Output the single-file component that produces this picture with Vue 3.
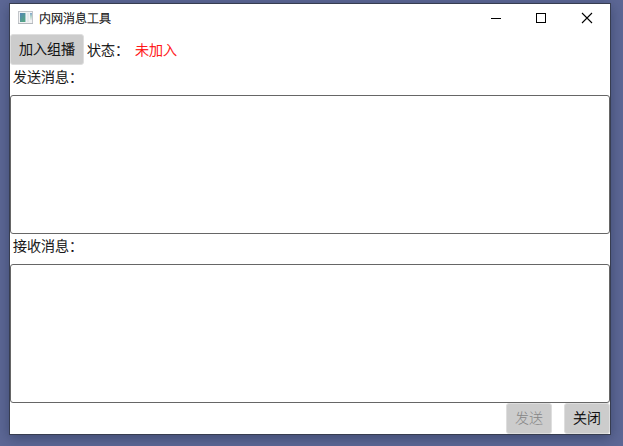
<script setup>
import { ref } from 'vue'

const joined = ref(false)
const outgoing = ref('')
const incoming = ref('')
</script>

<template>
  <div class="desktop">
    <main class="window">
      <header class="titlebar">
        <svg class="app-icon" width="16" height="14" viewBox="0 0 16 14">
          <defs>
            <linearGradient id="pane" x1="0" y1="0" x2="0.7" y2="1">
              <stop offset="0" stop-color="#5585b8" />
              <stop offset="1" stop-color="#54a582" />
            </linearGradient>
            <linearGradient id="side" x1="0" y1="0" x2="0" y2="1">
              <stop offset="0" stop-color="#7fa5cc" />
              <stop offset="0.5" stop-color="#b5d6ca" />
              <stop offset="1" stop-color="#e6eaec" />
            </linearGradient>
          </defs>
          <rect x="0.5" y="0.5" width="14" height="12" fill="#f2f3f4" stroke="#c3c6ca" />
          <rect x="2" y="2" width="5" height="9" fill="url(#pane)" />
          <rect x="7" y="2" width="1" height="9" fill="#aacbd0" />
          <rect x="9" y="2" width="2" height="9" fill="#e5e9ec" />
          <rect x="12" y="2" width="2" height="7" fill="url(#side)" />
          <rect x="0" y="12" width="15" height="1" fill="#b4b8bd" />
        </svg>
        <span class="title">内网消息工具</span>
        <div class="controls">
          <svg width="46" height="28" viewBox="0 0 46 28" shape-rendering="crispEdges">
            <path d="M18 14.5H28" stroke="#000" />
          </svg>
          <svg width="45" height="28" viewBox="0 0 45 28" shape-rendering="crispEdges">
            <rect x="17.5" y="9.5" width="9" height="9" fill="none" stroke="#000" />
          </svg>
          <svg width="46" height="28" viewBox="0 0 46 28">
            <path d="M18 9L28 19M28 9L18 19" stroke="#000" stroke-width="1.1" />
          </svg>
        </div>
      </header>

      <div class="toolbar">
        <button class="btn join">加入组播</button>
        <span class="status-label">状态：</span>
        <span class="status">{{ joined ? '已加入' : '未加入' }}</span>
      </div>

      <label class="caption" for="outgoing">发送消息：</label>
      <textarea id="outgoing" v-model="outgoing" class="box"></textarea>
      <label class="caption" for="incoming">接收消息：</label>
      <textarea id="incoming" v-model="incoming" class="box" readonly></textarea>

      <footer class="actions">
        <button class="btn small" :disabled="!joined">发送</button>
        <button class="btn small">关闭</button>
      </footer>
    </main>
  </div>
</template>

<style>
body {
  margin: 0;
  overflow: hidden;
}
</style>

<style scoped>
.desktop {
  box-sizing: border-box;
  width: 623px;
  height: 446px;
  padding: 3px 12px 11px 9px;
  background: #5d6896;
  font-family: "Noto Sans CJK SC", "Noto Sans", sans-serif;
  font-size: 14px;
  font-weight: 300;
  -webkit-text-stroke: 0.25px currentColor;
  color: #000;
  overflow: hidden;
}
.window {
  box-sizing: border-box;
  width: 602px;
  height: 432px;
  display: flex;
  flex-direction: column;
  background: #fff;
  border: 1px solid #373d50;
  box-shadow: 0 3px 13px rgba(20, 30, 60, 0.42);
}
.titlebar {
  display: flex;
  align-items: center;
  height: 28px;
  flex: none;
}
.app-icon {
  margin-left: 8px;
}
.title {
  margin-left: 5px;
  font-size: 12px;
  line-height: 28px;
}
.controls {
  display: flex;
  margin-left: auto;
}
.toolbar {
  display: flex;
  align-items: center;
  height: 31px;
  margin-top: 2px;
  flex: none;
}
.btn {
  box-sizing: border-box;
  padding: 0 0 3px;
  border: 1px solid #dedede;
  border-radius: 3px;
  background: #ccc;
  color: #000;
  font: inherit;
  line-height: 20px;
  text-align: center;
}
.btn:disabled {
  color: #858585;
  -webkit-text-stroke: 0;
}
.join {
  width: 74px;
  height: 31px;
}
.status-label {
  width: 48px;
  margin-left: 3px;
  line-height: 20px;
  padding-bottom: 1px;
  white-space: nowrap;
}
.status {
  color: #f00;
  line-height: 20px;
  padding-bottom: 1px;
}
.caption {
  height: 30px;
  padding-left: 3px;
  line-height: 22px;
  flex: none;
}
.box {
  box-sizing: border-box;
  display: block;
  width: 600px;
  height: 139px;
  flex: none;
  margin: 0;
  padding: 4px;
  border: 1px solid #666;
  border-radius: 3px;
  background: #fff;
  font: inherit;
  resize: none;
  outline: none;
}
.actions {
  display: flex;
  justify-content: flex-end;
  gap: 12px;
}
.small {
  width: 46px;
  height: 31px;
}
</style>
